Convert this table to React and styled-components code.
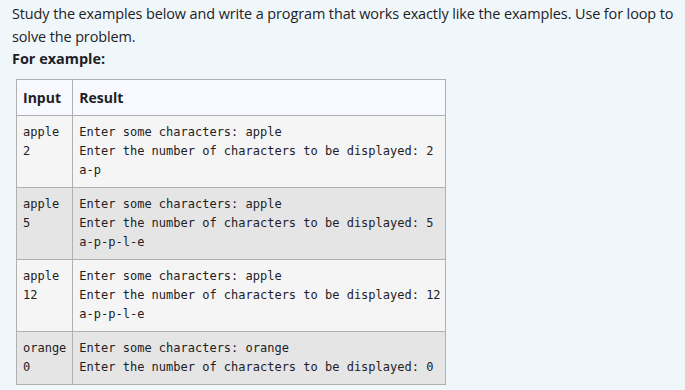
import React from "react";
import styled, { createGlobalStyle } from "styled-components";

const GlobalStyle = createGlobalStyle`
  body {
    margin: 0;
    background: #eff7fb;
    font-family: "Open Sans", "Liberation Sans", sans-serif;
    color: #1d2125;
  }
`;

const Page = styled.div`
  padding: 3px 6px 0 12px;
`;

const Intro = styled.p`
  margin: 0;
  font-size: 14.45px;
  line-height: 22.5px;
  letter-spacing: -0.1px;
`;

const Heading = styled.p`
  margin: 0 0 8px;
  font-size: 14.45px;
  line-height: 22.5px;
  font-weight: 700;
`;

const Table = styled.table`
  margin-left: 4px;
  border-collapse: collapse;
  border: 1px solid #b0b0b0;
`;

const HeadCell = styled.th`
  background: #f7f9ff;
  border: 1px solid #b0b0b0;
  height: 35px;
  padding: 0 6px;
  text-align: left;
  font-size: 14px;
  font-weight: 700;
`;

const Row = styled.tr`
  background: ${(p) => (p.$shade ? "#e5e5e5" : "#f5f5f5")};
`;

const Cell = styled.td`
  border: 1px solid #b0b0b0;
  padding: 7px 6px;
  vertical-align: top;
  font-family: "DejaVu Sans Mono", "Liberation Mono", monospace;
  font-size: 12px;
  line-height: 19px;
  white-space: pre;
  color: #1d2125;
`;

const ResultCell = styled(Cell)`
  padding-right: 4px;
`;

const rows = [
  {
    input: "apple\n2",
    result:
      "Enter some characters: apple\nEnter the number of characters to be displayed: 2\na-p",
  },
  {
    input: "apple\n5",
    result:
      "Enter some characters: apple\nEnter the number of characters to be displayed: 5\na-p-p-l-e",
  },
  {
    input: "apple\n12",
    result:
      "Enter some characters: apple\nEnter the number of characters to be displayed: 12\na-p-p-l-e",
  },
  {
    input: "orange\n0",
    result:
      "Enter some characters: orange\nEnter the number of characters to be displayed: 0",
  },
];

export default function App() {
  return (
    <Page>
      <GlobalStyle />
      <Intro>
        Study the examples below and write a program that works exactly like
        the examples. Use for loop to solve the problem.
      </Intro>
      <Heading>For example:</Heading>
      <Table>
        <thead>
          <tr>
            <HeadCell>Input</HeadCell>
            <HeadCell>Result</HeadCell>
          </tr>
        </thead>
        <tbody>
          {rows.map((r, i) => (
            <Row key={i} $shade={i % 2 === 1}>
              <Cell>{r.input}</Cell>
              <ResultCell>{r.result}</ResultCell>
            </Row>
          ))}
        </tbody>
      </Table>
    </Page>
  );
}
